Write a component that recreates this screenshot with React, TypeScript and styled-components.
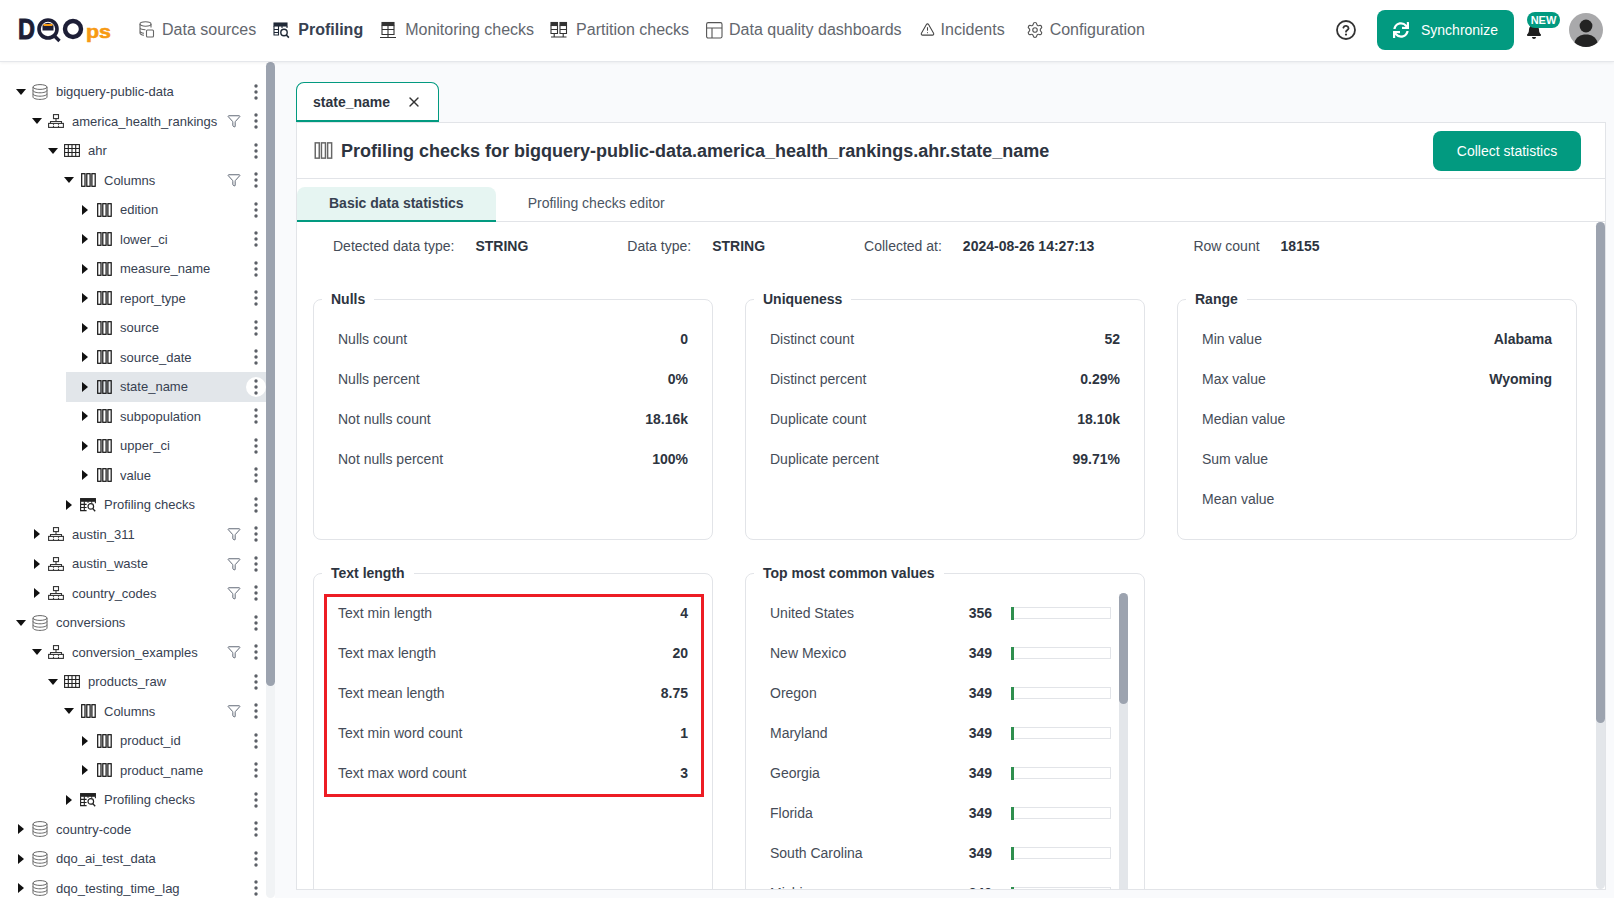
import styled, { createGlobalStyle } from 'styled-components';
import { Filter, Settings, TriangleAlert, X } from 'lucide-react';
import { FaBell, FaSync } from 'react-icons/fa';

const GlobalStyle = createGlobalStyle`
  * { box-sizing: border-box; }
  html, body { margin: 0; padding: 0; height: 100%; overflow: hidden; }
  body {
    font-family: "Liberation Sans", Arial, sans-serif;
    font-size: 14px;
    color: #374151;
    background: #fff;
  }
`;

const Page = styled.div`
  display: flex;
  flex-direction: column;
  height: 100vh;
`;

const Header = styled.header`
  display: flex;
  align-items: center;
  flex: none;
  height: 62px;
  padding: 0 11px 2px 18px;
  background: #fff;
  border-bottom: 1px solid #e5e7eb;
  box-shadow: 0 1px 3px rgba(0, 0, 0, 0.06);
  z-index: 2;
`;

const Nav = styled.nav`
  display: flex;
  align-items: center;
  margin-left: 27px;
`;

const NavItem = styled.a<{ $active?: boolean; $gap: number }>`
  display: flex;
  align-items: center;
  gap: 6px;
  margin-right: ${p => p.$gap}px;
  font-size: 16px;
  color: ${p => (p.$active ? '#374151' : '#63676e')};
  font-weight: ${p => (p.$active ? 700 : 400)};
`;

const HeaderRight = styled.div`
  display: flex;
  align-items: center;
  margin-left: auto;
`;

const HelpButton = styled.span`
  display: flex;
  margin-right: 21px;
`;

const PrimaryButton = styled.button<{ $width: number }>`
  display: flex;
  align-items: center;
  justify-content: center;
  gap: 12px;
  width: ${p => p.$width}px;
  height: 40px;
  border: 0;
  border-radius: 8px;
  background: #029a80;
  color: #fff;
  font-family: inherit;
  font-size: 14px;
`;

const BellWrap = styled.div`
  position: relative;
  width: 33px;
  height: 40px;
  margin: 0 9px 0 13px;
  color: #1f1f1f;
`;

const BellIcon = styled(FaBell)`
  position: absolute;
  left: -1px;
  top: 13px;
`;

const NewBadge = styled.span`
  position: absolute;
  left: 0;
  top: 2px;
  width: 33px;
  height: 16px;
  border-radius: 8px;
  background: #029a80;
  color: #fff;
  font-size: 11px;
  font-weight: 700;
  line-height: 16px;
  text-align: center;
`;

const Body = styled.div`
  display: flex;
  flex: 1;
  min-height: 0;
`;

const Sidebar = styled.aside`
  position: relative;
  flex: none;
  width: 275px;
  overflow: hidden;
  background: #fff;
  padding: 15px 9px 0 0;
`;

const ScrollTrack = styled.div<{ $color: string }>`
  position: absolute;
  top: 0;
  right: 0;
  bottom: 0;
  width: 9px;
  border-radius: 5px;
  background: ${p => p.$color};
`;

const ScrollThumb = styled.div<{ $height: number }>`
  height: ${p => p.$height}px;
  border-radius: 5px;
  background: #9ca3af;
`;

const TreeRow = styled.div<{ $depth: number; $selected?: boolean }>`
  display: flex;
  align-items: center;
  height: 29.5px;
  margin-left: ${p => 2 + p.$depth * 16}px;
  padding-left: 14px;
  font-size: 13px;
  color: #374151;
  background: ${p => (p.$selected ? '#e2e6ea' : 'transparent')};
`;

const Caret = styled.span<{ $open?: boolean }>`
  flex: none;
  width: 10px;
  margin-right: 6px;
  display: flex;
  justify-content: center;

  &::before {
    content: '';
    display: block;
    border-style: solid;
    border-color: transparent;
    ${p =>
      p.$open
        ? 'border-width: 6px 5px 0 5px; border-top-color: #111;'
        : 'border-width: 5px 0 5px 6px; border-left-color: #111;'}
  }
`;

const NodeIcon = styled.span`
  flex: none;
  display: flex;
  justify-content: center;
  width: 16px;
  margin-right: 8px;
`;

const NodeLabel = styled.span`
  flex: 1;
  white-space: nowrap;
  overflow: hidden;
`;

const FilterSlot = styled.span`
  flex: none;
  display: flex;
  justify-content: center;
  width: 16px;
  margin-right: 4px;
  color: #4b5563;
`;

const DotsButton = styled.span<{ $selected?: boolean }>`
  flex: none;
  display: flex;
  align-items: center;
  justify-content: center;
  width: 20px;
  height: 20px;
  border-radius: 50%;
  background: ${p => (p.$selected ? '#fff' : 'transparent')};
`;

const Main = styled.main`
  flex: 1;
  min-width: 0;
  display: flex;
  flex-direction: column;
  padding: 20px 8px 8px 21px;
  background: #f9fafc;
`;

const TabStrip = styled.div`
  display: flex;
  flex: none;
`;

const OpenTab = styled.div`
  display: flex;
  align-items: center;
  justify-content: space-between;
  width: 143px;
  height: 40px;
  padding: 0 16px 0 16px;
  background: #fff;
  border: 1px solid #029a80;
  border-bottom-width: 2px;
  border-radius: 8px 8px 0 0;
  font-weight: 700;
  color: #2d3440;
`;

const Panel = styled.section`
  flex: 1;
  min-height: 0;
  display: flex;
  flex-direction: column;
  background: #fff;
  border: 1px solid #e2e4e8;
`;

const PanelHeader = styled.div`
  display: flex;
  align-items: center;
  flex: none;
  height: 56px;
  padding: 0 24px 0 17px;
  border-bottom: 1px solid #e2e4e8;
`;

const Title = styled.h1`
  flex: 1;
  margin: 0 0 0 8px;
  padding-top: 2px;
  font-size: 18px;
  font-weight: 700;
  color: #2d3440;
`;

const SubTabs = styled.div`
  display: flex;
  align-items: flex-end;
  gap: 32px;
  flex: none;
  height: 43px;
  border-bottom: 1px solid #e2e4e8;
`;

const SubTab = styled.div<{ $active?: boolean }>`
  display: flex;
  align-items: center;
  height: 35px;
  padding: ${p => (p.$active ? '0 32px 1px' : '0 0 1px')};
  margin-bottom: -1px;
  border-radius: 8px 8px 0 0;
  border-bottom: 2px solid ${p => (p.$active ? '#029a80' : 'transparent')};
  background: ${p => (p.$active ? '#e6f5f2' : 'transparent')};
  font-weight: ${p => (p.$active ? 700 : 400)};
  color: ${p => (p.$active ? '#374151' : '#4b5563')};
`;

const ScrollBody = styled.div`
  position: relative;
  flex: 1;
  min-height: 0;
  overflow: hidden;
  padding-left: 16px;
`;

const InfoRow = styled.div`
  display: flex;
  align-items: center;
  gap: 99px;
  height: 48px;
  margin-bottom: 19px;
  padding-left: 20px;
`;

const InfoPair = styled.div`
  display: flex;
  gap: 21px;
`;

const InfoLabel = styled.span`
  color: #454c58;
`;

const BoldValue = styled.span`
  font-weight: 700;
  color: #2d3440;
`;

const CardGrid = styled.div`
  display: grid;
  grid-template-columns: repeat(3, 400px);
  column-gap: 32px;
  row-gap: 23px;
`;

const Card = styled.fieldset<{ $height: number }>`
  min-width: 0;
  height: ${p => p.$height}px;
  margin: 0;
  padding: 10px 24px 0;
  border: 1px solid #e2e4e8;
  border-radius: 8px;
`;

const CardLegend = styled.legend`
  margin-left: -16px;
  padding: 0 9px;
  font-size: 14px;
  font-weight: 700;
  line-height: 20px;
  color: #2d3440;
`;

const StatRows = styled.div`
  position: relative;
`;

const StatRow = styled.div`
  display: flex;
  align-items: center;
  justify-content: space-between;
  height: 40px;
  color: #454c58;
`;

const RedHighlight = styled.div`
  position: absolute;
  top: 1px;
  left: -14px;
  right: -16px;
  height: 203px;
  border: 3px solid #ed1c24;
  pointer-events: none;
`;

const TopList = styled.div`
  position: relative;
  height: 300px;
  margin-right: -8px;
  overflow: hidden;
`;

const TopRow = styled.div`
  display: flex;
  align-items: center;
  height: 40px;
  padding-right: 17px;
  color: #454c58;
`;

const TopName = styled.span`
  flex: 1;
`;

const TopBar = styled.div`
  position: relative;
  flex: none;
  width: 100px;
  height: 12px;
  margin-left: 19px;
  border: 1px solid #e2e4e8;
`;

const TopFill = styled.div`
  position: absolute;
  left: -1px;
  top: -1px;
  height: 13px;
  background: #2f8f4e;
`;

type NodeKind = 'db' | 'schema' | 'table' | 'columns' | 'checks';

interface TreeNode {
  label: string;
  depth: number;
  kind: NodeKind;
  open?: boolean;
  filter?: boolean;
  selected?: boolean;
}

const col = (label: string, selected = false): TreeNode => ({ label, depth: 4, kind: 'columns', selected });

const treeNodes: TreeNode[] = [
  { label: 'bigquery-public-data', depth: 0, kind: 'db', open: true },
  { label: 'america_health_rankings', depth: 1, kind: 'schema', open: true, filter: true },
  { label: 'ahr', depth: 2, kind: 'table', open: true },
  { label: 'Columns', depth: 3, kind: 'columns', open: true, filter: true },
  col('edition'),
  col('lower_ci'),
  col('measure_name'),
  col('report_type'),
  col('source'),
  col('source_date'),
  col('state_name', true),
  col('subpopulation'),
  col('upper_ci'),
  col('value'),
  { label: 'Profiling checks', depth: 3, kind: 'checks' },
  { label: 'austin_311', depth: 1, kind: 'schema', filter: true },
  { label: 'austin_waste', depth: 1, kind: 'schema', filter: true },
  { label: 'country_codes', depth: 1, kind: 'schema', filter: true },
  { label: 'conversions', depth: 0, kind: 'db', open: true },
  { label: 'conversion_examples', depth: 1, kind: 'schema', open: true, filter: true },
  { label: 'products_raw', depth: 2, kind: 'table', open: true },
  { label: 'Columns', depth: 3, kind: 'columns', open: true, filter: true },
  col('product_id'),
  col('product_name'),
  { label: 'Profiling checks', depth: 3, kind: 'checks' },
  { label: 'country-code', depth: 0, kind: 'db' },
  { label: 'dqo_ai_test_data', depth: 0, kind: 'db' },
  { label: 'dqo_testing_time_lag', depth: 0, kind: 'db' },
];

const nulls = [
  ['Nulls count', '0'],
  ['Nulls percent', '0%'],
  ['Not nulls count', '18.16k'],
  ['Not nulls percent', '100%'],
];
const uniqueness = [
  ['Distinct count', '52'],
  ['Distinct percent', '0.29%'],
  ['Duplicate count', '18.10k'],
  ['Duplicate percent', '99.71%'],
];
const range = [
  ['Min value', 'Alabama'],
  ['Max value', 'Wyoming'],
  ['Median value', ''],
  ['Sum value', ''],
  ['Mean value', ''],
];
const textLength = [
  ['Text min length', '4'],
  ['Text max length', '20'],
  ['Text mean length', '8.75'],
  ['Text min word count', '1'],
  ['Text max word count', '3'],
];
const topValues: [string, number][] = [
  ['United States', 356],
  ['New Mexico', 349],
  ['Oregon', 349],
  ['Maryland', 349],
  ['Georgia', 349],
  ['Florida', 349],
  ['South Carolina', 349],
  ['Michigan', 349],
];

function Logo() {
  const font = { fontFamily: '"Liberation Sans", Arial, sans-serif', fontWeight: 700 };
  return (
    <svg width="94" height="30" viewBox="0 0 94 30" overflow="visible" style={{ marginTop: 2 }}>
      <text x="0" y="23" fontSize="29" textLength="17" lengthAdjust="spacingAndGlyphs" fill="#1d1e36" stroke="#1d1e36" strokeWidth="1" style={font}>D</text>
      <circle cx="30" cy="13" r="9" fill="none" stroke="#1d1e36" strokeWidth="3.6" />
      <path d="M24.5 9.5a7 7 0 0 1 11 0v5h-11z" fill="#1d1e36" />
      <rect x="25.5" y="8" width="9" height="2" fill="#f79a12" />
      <path d="M35.5 19l6 6" stroke="#1d1e36" strokeWidth="3.4" />
      <circle cx="55" cy="13" r="8" fill="none" stroke="#1d1e36" strokeWidth="4.4" />
      <text x="68" y="22" fontSize="19" textLength="25" lengthAdjust="spacingAndGlyphs" fill="#f79a12" stroke="#f79a12" strokeWidth="0.6" style={font}>ps</text>
    </svg>
  );
}

function DataSourcesIcon() {
  return (
    <svg width="17" height="18" viewBox="0 0 17 18" fill="none" stroke="#666" strokeWidth="1.1">
      <ellipse cx="6.5" cy="3" rx="5.5" ry="2.2" />
      <path d="M1 3v9c0 1.2 2 2 4 2.2M1 6.5c0 1.2 2.4 2.2 5.5 2.2M1 10c0 1.2 2 2 4 2.2M12 3v3.5" />
      <rect x="7.5" y="9" width="7" height="7" rx="1" fill="#fff" />
    </svg>
  );
}

function ProfilingIcon({ width = 19 }: { width?: number }) {
  return (
    <svg width={width} height="18" viewBox="0 0 19 18" fill="none" stroke="#1f2937" strokeWidth="1.1">
      <rect x="1" y="2" width="13" height="3" fill="#1f2937" />
      <path d="M1 5v9h5M14 5v2M5.5 5v9M1 8.5h5M1 11.5h5M9 5v2" />
      <circle cx="11" cy="11.5" r="3.2" strokeWidth="1.4" />
      <path d="M13.3 14l2.6 2.6" strokeWidth="1.6" />
    </svg>
  );
}

function MonitoringIcon() {
  return (
    <svg width="20" height="18" viewBox="0 0 20 18" fill="none" stroke="#333" strokeWidth="1.1">
      <rect x="3" y="1.5" width="12" height="3" fill="#333" />
      <path d="M3 4.5v9h12v-9M9 4.5v9M3 8.5h12M9 13.5v3M1 16.5h16" />
    </svg>
  );
}

function PartitionIcon() {
  return (
    <svg width="20" height="18" viewBox="0 0 20 18" fill="none" stroke="#333" strokeWidth="1.1">
      <rect x="1" y="1.5" width="6.5" height="3" fill="#333" />
      <rect x="10" y="1.5" width="6.5" height="3" fill="#333" />
      <path d="M1 4.5v8h6.5v-8M10 4.5v8h6.5v-8M1 8.5h6.5M10 8.5h6.5M4.2 12.5v3.5M13.2 12.5v3.5M1 16h15.5" />
    </svg>
  );
}

function DashboardIcon() {
  return (
    <svg width="17" height="18" viewBox="0 0 17 18" fill="none" stroke="#555" strokeWidth="1.1">
      <rect x="0.6" y="1.6" width="15.4" height="15.4" rx="1.6" />
      <path d="M0.6 7h15.4M6 7v10" />
    </svg>
  );
}

function HelpIcon() {
  return (
    <svg width="20" height="20" viewBox="0 0 20 20" fill="none" stroke="#333" strokeWidth="1.8" strokeLinecap="round">
      <circle cx="10" cy="10" r="9" />
      <path d="M7.4 7.6a2.7 2.7 0 0 1 5.2 .7c0 1.7-2.6 2.2-2.6 3.4" />
      <path d="M10 14.6h.01" strokeWidth="2.2" />
    </svg>
  );
}

function Avatar() {
  return (
    <svg width="34" height="34" viewBox="0 0 34 34">
      <circle cx="17" cy="17" r="17" fill="#a9a9ab" />
      <circle cx="17" cy="13" r="6.4" fill="#232323" />
      <path d="M5.5 29.5c1.5-5.5 6-8 11.5-8s10 2.5 11.5 8A17 17 0 0 1 17 34a17 17 0 0 1-11.5-4.5z" fill="#232323" />
    </svg>
  );
}

function ColumnsGlyph({ color = '#111', width = 15, height = 14 }: { color?: string; width?: number; height?: number }) {
  return (
    <svg width={width} height={height} viewBox="0 0 15 14" fill="none" stroke={color} strokeWidth="1.2">
      <rect x="0.7" y="0.7" width="3.3" height="12.6" />
      <rect x="5.8" y="0.7" width="3.3" height="12.6" />
      <rect x="10.9" y="0.7" width="3.3" height="12.6" />
    </svg>
  );
}

function NodeGlyph({ kind }: { kind: NodeKind }) {
  if (kind === 'db') {
    return (
      <svg width="16" height="16" viewBox="0 0 16 16" fill="none" stroke="#666" strokeWidth="1">
        <ellipse cx="8" cy="3" rx="7" ry="2.4" />
        <path d="M1 3v10c0 1.3 3.1 2.4 7 2.4s7-1.1 7-2.4V3M1 6.4c0 1.3 3.1 2.4 7 2.4s7-1.1 7-2.4M1 9.8c0 1.3 3.1 2.4 7 2.4s7-1.1 7-2.4" />
      </svg>
    );
  }
  if (kind === 'schema') {
    return (
      <svg width="16" height="14" viewBox="0 0 16 14" fill="none" stroke="#333" strokeWidth="1.1">
        <rect x="5.5" y="0.6" width="5" height="4" />
        <path d="M8 4.6v3M2.5 9.5v-2h11v2" />
        <rect x="0.6" y="9.4" width="14.8" height="4" />
        <path d="M5.5 9.4v4M10.5 9.4v4" strokeDasharray="1.4 1" />
      </svg>
    );
  }
  if (kind === 'table') {
    return (
      <svg width="16" height="13" viewBox="0 0 16 13" fill="none" stroke="#222" strokeWidth="1.1">
        <rect x="0.6" y="0.6" width="14.8" height="11.8" />
        <path d="M0.6 4.5h14.8M0.6 8.5h14.8M4.3 0.6v11.8M8 0.6v11.8M11.7 0.6v11.8" />
      </svg>
    );
  }
  if (kind === 'checks') {
    return (
      <svg width="16" height="14" viewBox="0 0 16 14" fill="none" stroke="#222" strokeWidth="1.1">
        <rect x="0.6" y="0.6" width="14.8" height="2.6" fill="#222" />
        <path d="M0.6 3.2v9.4h6M15.4 3.2v2M0.6 6.4h6M0.6 9.5h6M4.3 3.2v9.4M8 3.2v1.6M11.7 3.2v1.6" />
        <circle cx="10.8" cy="8.4" r="2.8" strokeWidth="1.2" />
        <path d="M12.8 10.6l2.4 2.6" strokeWidth="1.4" />
      </svg>
    );
  }
  return <ColumnsGlyph />;
}

function Dots() {
  return (
    <svg width="4" height="16" viewBox="0 0 4 16" fill="#5b5f66">
      <circle cx="2" cy="2" r="1.7" />
      <circle cx="2" cy="8" r="1.7" />
      <circle cx="2" cy="14" r="1.7" />
    </svg>
  );
}

const navItems = [
  { label: 'Data sources', icon: <DataSourcesIcon />, gap: 17 },
  { label: 'Profiling', icon: <ProfilingIcon />, gap: 16, active: true },
  { label: 'Monitoring checks', icon: <MonitoringIcon />, gap: 16 },
  { label: 'Partition checks', icon: <PartitionIcon />, gap: 17 },
  { label: 'Data quality dashboards', icon: <DashboardIcon />, gap: 18 },
  { label: 'Incidents', icon: <TriangleAlert size={15} color="#444" strokeWidth={1.7} />, gap: 21 },
  { label: 'Configuration', icon: <Settings size={18} color="#555" strokeWidth={1.5} />, gap: 0 },
];

function Rows({ rows }: { rows: string[][] }) {
  return (
    <>
      {rows.map(([label, value]) => (
        <StatRow key={label}>
          <span>{label}</span>
          <BoldValue>{value}</BoldValue>
        </StatRow>
      ))}
    </>
  );
}

export default function App() {
  return (
    <Page>
      <GlobalStyle />
      <Header>
        <Logo />
        <Nav>
          {navItems.map(item => (
            <NavItem key={item.label} $active={item.active} $gap={item.gap}>
              {item.icon}
              {item.label}
            </NavItem>
          ))}
        </Nav>
        <HeaderRight>
          <HelpButton>
            <HelpIcon />
          </HelpButton>
          <PrimaryButton $width={137}>
            <FaSync size={16} />
            Synchronize
          </PrimaryButton>
          <BellWrap>
            <BellIcon size={16} />
            <NewBadge>NEW</NewBadge>
          </BellWrap>
          <Avatar />
        </HeaderRight>
      </Header>
      <Body>
        <Sidebar>
          {treeNodes.map((node, i) => (
            <TreeRow key={i} $depth={node.depth} $selected={node.selected}>
              <Caret $open={node.open} />
              <NodeIcon>
                <NodeGlyph kind={node.kind} />
              </NodeIcon>
              <NodeLabel>{node.label}</NodeLabel>
              {node.filter && (
                <FilterSlot>
                  <Filter size={14} strokeWidth={1.5} />
                </FilterSlot>
              )}
              <DotsButton $selected={node.selected}>
                <Dots />
              </DotsButton>
            </TreeRow>
          ))}
          <ScrollTrack $color="#f1f3f5">
            <ScrollThumb $height={624} />
          </ScrollTrack>
        </Sidebar>
        <Main>
          <TabStrip>
            <OpenTab>
              state_name
              <X size={16} color="#333" strokeWidth={2} />
            </OpenTab>
          </TabStrip>
          <Panel>
            <PanelHeader>
              <ColumnsGlyph color="#666" width={19} height={17} />
              <Title>Profiling checks for bigquery-public-data.america_health_rankings.ahr.state_name</Title>
              <PrimaryButton $width={148}>Collect statistics</PrimaryButton>
            </PanelHeader>
            <SubTabs>
              <SubTab $active>Basic data statistics</SubTab>
              <SubTab>Profiling checks editor</SubTab>
            </SubTabs>
            <ScrollBody>
              <InfoRow>
                <InfoPair>
                  <InfoLabel>Detected data type:</InfoLabel>
                  <BoldValue>STRING</BoldValue>
                </InfoPair>
                <InfoPair>
                  <InfoLabel>Data type:</InfoLabel>
                  <BoldValue>STRING</BoldValue>
                </InfoPair>
                <InfoPair>
                  <InfoLabel>Collected at:</InfoLabel>
                  <BoldValue>2024-08-26 14:27:13</BoldValue>
                </InfoPair>
                <InfoPair>
                  <InfoLabel>Row count</InfoLabel>
                  <BoldValue>18155</BoldValue>
                </InfoPair>
              </InfoRow>
              <CardGrid>
                <Card $height={251}>
                  <CardLegend>Nulls</CardLegend>
                  <Rows rows={nulls} />
                </Card>
                <Card $height={251}>
                  <CardLegend>Uniqueness</CardLegend>
                  <Rows rows={uniqueness} />
                </Card>
                <Card $height={251}>
                  <CardLegend>Range</CardLegend>
                  <Rows rows={range} />
                </Card>
                <Card $height={510}>
                  <CardLegend>Text length</CardLegend>
                  <StatRows>
                    <Rows rows={textLength} />
                    <RedHighlight />
                  </StatRows>
                </Card>
                <Card $height={510}>
                  <CardLegend>Top most common values</CardLegend>
                  <TopList>
                    {topValues.map(([name, count]) => (
                      <TopRow key={name}>
                        <TopName>{name}</TopName>
                        <BoldValue>{count}</BoldValue>
                        <TopBar>
                          <TopFill style={{ width: `${count / 100}%`, minWidth: 3 }} />
                        </TopBar>
                      </TopRow>
                    ))}
                    <ScrollTrack $color="#e3e6ea">
                      <ScrollThumb $height={111} />
                    </ScrollTrack>
                  </TopList>
                </Card>
              </CardGrid>
              <ScrollTrack $color="#e3e6ea">
                <ScrollThumb $height={501} />
              </ScrollTrack>
            </ScrollBody>
          </Panel>
        </Main>
      </Body>
    </Page>
  );
}
